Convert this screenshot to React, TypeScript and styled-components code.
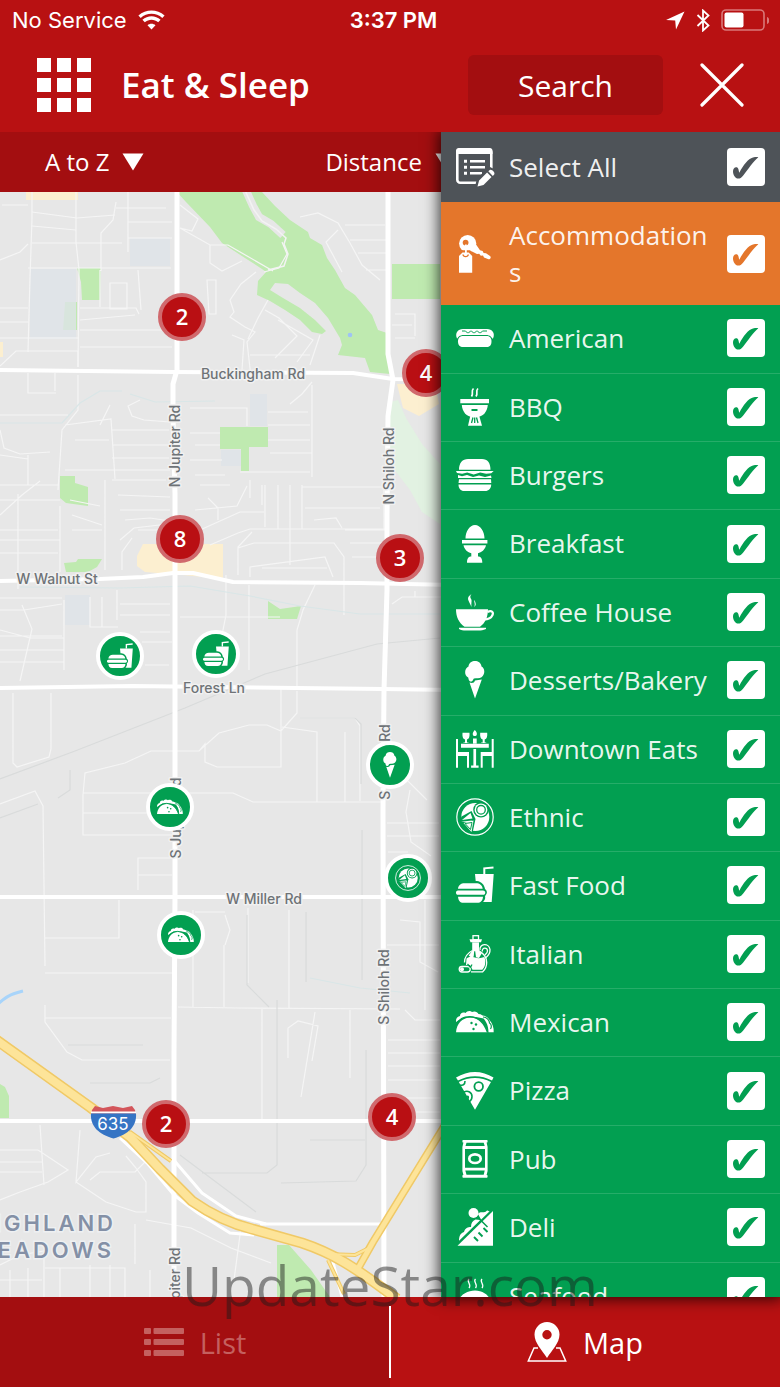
import React, { useState } from "react";
import styled, { createGlobalStyle, css } from "styled-components";

const color = {
  red: "#b81112",
  redDark: "#a30e10",
  green: "#029f51",
  orange: "#e4762b",
  slate: "#4e5358",
  land: "#e7e7e7",
  park: "#bfeab0",
};
const sans = `"Open Sans", "Noto Sans", sans-serif`;
const system = `Inter, "Liberation Sans", sans-serif`;

const GlobalStyle = createGlobalStyle`
  * { box-sizing: border-box; }
  body { margin: 0; background: ${color.red}; font-family: ${sans}; color: #fff; }
  button { font: inherit; color: inherit; border: 0; padding: 0; background: none; cursor: pointer; }
`;

/* ---------- shell ---------- */

const Screen = styled.div`
  position: relative;
  display: flex;
  flex-direction: column;
  height: 100vh;
  overflow: hidden;
  background: ${color.red};
`;

const TopArea = styled.header`
  position: relative;
  z-index: 3;
  background: ${color.red};
`;

const StatusBar = styled.div`
  display: grid;
  grid-template-columns: 1fr auto 1fr;
  align-items: center;
  height: 40px;
  padding: 0 11px 0 12px;
  font: 400 22px/28px ${system};
`;

const StatusGroup = styled.div<{ $end?: boolean }>`
  display: flex;
  align-items: center;
  gap: 11px;
  justify-content: ${(p) => (p.$end ? "flex-end" : "flex-start")};
`;

const Clock = styled.time`
  padding-left: 6px;
  font-weight: 600;
`;

const TitleBar = styled.div`
  display: flex;
  align-items: center;
  height: 90px;
  margin-bottom: 2px;
  padding: 0 36px 0 37px;
`;

const IconButton = styled.button`
  display: flex;
`;

const Title = styled.h1`
  flex: 1;
  margin: 0 0 0 30px;
  font-size: 35px;
  line-height: 46px;
  font-weight: 600;
`;

const SearchButton = styled.button`
  width: 195px;
  height: 60px;
  margin-right: 37px;
  border-radius: 6px;
  && {
    background: ${color.redDark};
    font-size: 30px;
  }
`;

const Body = styled.main`
  position: relative;
  z-index: 2;
  flex: 1;
  min-height: 0;
  display: flex;
  flex-direction: column;
`;

const SortBar = styled.div`
  display: flex;
  align-items: center;
  gap: 181px;
  height: 60px;
  padding: 0 45px;
  background: ${color.redDark};
`;

const SortButton = styled.button`
  display: flex;
  align-items: center;
  gap: 13px;
  && {
    font-size: 24px;
    line-height: 36px;
  }
`;

/* ---------- map ---------- */

const MapCanvas = styled.section`
  position: relative;
  flex: 1;
  min-height: 0;
  overflow: hidden;
  background: ${color.land};
`;

const MapDrawing = styled.svg`
  position: absolute;
  left: 0;
  top: 0;
  width: 780px;
  height: 1105px;
`;

const pinBase = css<{ $x: number; $y: number }>`
  position: absolute;
  left: ${(p) => p.$x}px;
  top: ${(p) => p.$y}px;
  transform: translate(-50%, -50%);
  display: flex;
  align-items: center;
  justify-content: center;
  border-radius: 50%;
`;

const Cluster = styled.button<{ $x: number; $y: number }>`
  ${pinBase}
  && {
    width: 48px;
    height: 48px;
    padding-bottom: 2px;
    border: 4px solid #d0696d;
    background: #b90f13;
    font-size: 22px;
    font-weight: 600;
    line-height: 30px;
  }
`;

const Pin = styled.button<{ $x: number; $y: number }>`
  ${pinBase}
  && {
    width: 48px;
    height: 48px;
    border: 4px solid #fff;
    background: ${color.green};
  }
`;

/* ---------- category panel ---------- */

const Panel = styled.aside`
  position: absolute;
  top: 0;
  right: 0;
  bottom: 0;
  width: 339px;
  max-width: 80%;
  box-shadow: 0 0 14px 2px rgba(0, 0, 0, 0.75);
`;

const PanelScroll = styled.div`
  height: 100%;
  overflow-y: auto;
  scrollbar-width: none;
  background: ${color.green};
`;

const rowKinds = {
  all: { bg: color.slate, padding: "17px 15px", border: "none" },
  stay: { bg: color.orange, padding: "15px", border: "none" },
  food: { bg: color.green, padding: "15px 15px 16px", border: "1px solid #26ad69" },
};
type Kind = keyof typeof rowKinds;

const Row = styled.label<{ $kind: Kind }>`
  display: flex;
  align-items: center;
  gap: 15px;
  padding: ${(p) => rowKinds[p.$kind].padding};
  border-bottom: ${(p) => rowKinds[p.$kind].border};
  background: ${(p) => rowKinds[p.$kind].bg};
  font-size: 26px;
  line-height: 1.4;
  cursor: pointer;
`;

const RowName = styled.span`
  flex: 1;
  min-width: 0;
  overflow-wrap: anywhere;
  color: rgba(255, 255, 255, 0.93);
`;

const CheckBox = styled.span`
  flex: none;
  display: grid;
  width: 38px;
  height: 38px;
  margin: -1px 0;
  & > * {
    grid-area: 1 / 1;
  }
`;

const CheckInput = styled.input`
  appearance: none;
  width: 38px;
  height: 38px;
  margin: 0;
  border-radius: 4px;
  background: #fff;
  cursor: pointer;
  &:not(:checked) + svg {
    visibility: hidden;
  }
`;

const CheckMark = styled.svg`
  position: relative;
  width: 38px;
  height: 38px;
  pointer-events: none;
`;

const IconSvg = styled.svg<{ $bg: string; $size: number }>`
  flex: none;
  width: ${(p) => p.$size}px;
  height: ${(p) => p.$size}px;
  margin: -1px 0;
  overflow: visible;
  fill: #fff;
  .cut {
    fill: ${(p) => p.$bg};
  }
  .cutline {
    fill: none;
    stroke: ${(p) => p.$bg};
  }
  .line {
    fill: none;
    stroke: #fff;
  }
`;

/* ---------- footer ---------- */

const TabBar = styled.nav`
  display: flex;
  flex: none;
  height: 90px;
`;

const Tab = styled.button<{ $dim?: boolean }>`
  flex: 1;
  display: flex;
  align-items: center;
  justify-content: center;
  gap: 16px;
  && {
    background: ${(p) => (p.$dim ? color.redDark : color.red)};
    color: ${(p) => (p.$dim ? "#c4605f" : "#fff")};
    font-size: 29px;
  }
`;

const TabDivider = styled.span`
  width: 2px;
  margin: 9px -1px;
  z-index: 1;
  background: #fff;
`;

const Watermark = styled.div`
  position: absolute;
  z-index: 4;
  left: 0;
  right: 0;
  bottom: 66px;
  text-align: center;
  font-size: 55px;
  line-height: 72px;
  color: rgba(25, 25, 25, 0.47);
  pointer-events: none;
`;

/* ---------- icons, drawn on a 38 unit square ---------- */

const icons: Record<string, React.ReactNode> = {
  selectAll: (
    <>
      <rect x="1.3" y="1.3" width="34" height="33.4" rx="3" className="line" strokeWidth="2.6" />
      <path d="M0 6V3a3 3 0 0 1 3-3h30.500a3 3 0 0 1 3 3v3z" />
      <path d="M8 11.800h3v3H8zM8 17.800h3v3H8zM8 23.800h3v3H8zM14 12h15v2.600H14zM14 18h15v2.600H14zM14 24h12v2.600H14z" />
      <path className="cut" d="M19 39l2-9L34 19l6 3v17z" />
      <path d="M21.500 38.500l1.600-6 8-8 4.400 4.400-8 8zM32.300 23.300l1.500-1.300c1.500-1.300 6 2.500 4.400 4.500l-1.400 1.400z" />
    </>
  ),
  key: (
    <>
      <path d="M13 15l6-7 5 7.200 2.600.8 1 2 2.400.3 4 2.700c1.500 1.300.5 3.500-1.500 3.300L28 22.500l-1-2-2.200.2-1.600-2-2.200.3z" />
      <circle cx="11.700" cy="8.600" r="8.600" />
      <circle cx="9.600" cy="7.600" r="2.900" className="cut" />
      <path className="cut" d="M1 20l5-4.800h8L19.500 20v3H1z" />
      <path d="M3 37.700V21l3.500-3.500h6.200L16.200 21v16.700z" />
      <path className="cutline" strokeWidth="1.400" d="M7 19.500c.5 2.800 4.800 2.800 5.300 0" />
      <path d="M9 9.500h1.800V20H9z" />
    </>
  ),
  hotdog: (
    <>
      <path d="M1 19.500C-1.500 14 2 10 7 10h24c5 0 8.500 4 6 9.500z" />
      <path className="cut" d="M1 21.500C1 18 4 15.900 7.500 15.900h22.700c3.500 0 6.300 2.100 6.300 5.600z" />
      <path className="cutline" strokeWidth="1" d="M6 12h3.500c1.500 2.300 3.500 2.300 5 0h1c1.500 2.300 3.500 2.300 5 0h1c1.500 2.300 3.500 2.300 5 0H31" />
      <path d="M2 22.500c0-3.800 2-5.400 5.500-5.400h23c3 0 5 1.600 5 5.400 0 3.800-2 5.500-5 5.500H7c-3 0-5-1.700-5-5.500z" />
    </>
  ),
  bbq: (
    <>
      <path className="line" strokeWidth="1.700" d="M17.500.5c-3 3 .5 4-2 8M22 .5c-3 3 .5 4-2 8" />
      <path d="M4.300 11H33v4.300H4.300zM5.800 17h26c-.5 7-5 12-11 12h-4c-6 0-10.500-5-11-12z" />
      <path className="cut" d="M15.500 21h6v2h-6z" />
      <path d="M14.500 27h8.500l3 10.700H12z" />
      <path className="cutline" strokeWidth="1.300" d="M17 29.500l-1.500 5.500M18.700 29.500V35M20.500 29.500l1.500 5.500" />
    </>
  ),
  burger: (
    <>
      <path d="M3 13.700C3 7 6.500 3 12 3h14c5.500 0 8.500 4 8.500 10.700zM2.500 28.500h32.700c0 4-2.500 6.500-6 6.500h-21c-3.500 0-5.700-2.500-5.700-6.500z" />
      <path d="M0 15h37.700l-2.500 2.200-5 .6-6-1.300-6.500 2-6.500-2-5 1.300L1 17zM3 23.300h32l.3 3.700H2.500zM2 19l4 1.300 5-1.300 6 2 6-1.500 6 1.500 6-1.500.5 2.500H2z" />
    </>
  ),
  egg: (
    <path d="M9.500 13.400C9.500 7 13.500 0 19 0s9.500 7 9.500 13.400zM6 15h25.400v3.600H6zM7.500 20.300H30c-1 4.700-4.500 7-8 8v3.200c2.500 0 4.300 1.500 4.300 6.200H11c0-4.700 1.800-6.200 4.300-6.200v-3.200c-3.500-1-6.800-3.300-7.800-8z" />
  ),
  coffee: (
    <>
      <path d="M0 16.300h32c0 8-3 14-8 17.500H8.500C3 30 0 24 0 16.300zM3 34.800h27v1.200c-3 1.500-5 1.500-7 1.500H10c-3 0-5 0-7-1.500z" />
      <path className="line" strokeWidth="2.200" d="M31.500 19c4-2 6.300 0 5 3-1 2.500-4.500 4.500-8 4.500" />
      <path d="M15.500 1c-6 4-3 6 0 13-.5-6 1-6-1-9-.5-1.500 0-2.500 1-4zM18.500 7c-1 2 1.500 4-.5 7 3-2 1.500-4 .5-7z" />
    </>
  ),
  cone: (
    <>
      <path d="M12.500 5.500C13 1.500 16 0 19 0s6 1.500 6.500 5.500c3.500 1.500 4 8 0 10.700-2 1.500-5 .8-7.500 1.300-1 .5-1 3-3 3-2.500 0-2.300-2.700-2.800-4-4.200-2-4-9 .3-11z" />
      <path d="M19 19.500l6.800-1L19 37.600l-5.500-16c2.500.8 5 .4 5.500-2.100z" />
    </>
  ),
  dining: (
    <>
      <path d="M0 9h2v13h11v15.700h-2V26H2v11.700H0zM37.700 9h-2v13h-11v15.700h2V26h9v11.700h2z" />
      <path d="M5 13.700h27.800v4H5zM17.400 19h2.700v16.500h2.500v2.200h-7.500v-2.200h2.300zM17 8.500h3.700v5H17zM18.800 0c1.800 2 2.300 3 2 4.500-.3 2-3.700 2-4 0-.3-1.500.4-2.500 2-4.500zM6.500 2.700h7c.3 3.500-.2 6-2.500 6.800v3h1.500V13H7.500v-.5H9v-3c-2.300-.8-2.800-3.300-2.500-6.800zM24.200 2.700h7c.3 3.500-.2 6-2.500 6.800v3h1.500V13h-5v-.5h1.500v-3c-2.300-.8-2.800-3.300-2.500-6.800z" />
    </>
  ),
  ethnic: (
    <>
      <circle cx="19" cy="19" r="18.200" className="line" strokeWidth="1.200" />
      <circle cx="19.300" cy="19" r="14" />
      <circle cx="25" cy="11.800" r="7.800" className="cut" />
      <circle cx="25" cy="11.800" r="6.400" />
      <circle cx="25" cy="11.800" r="4.300" className="cutline" strokeWidth="1.300" />
      <path className="cut" d="M3 25l2.500-6.500 10-5.500 4 8-3 14-7.500-3z" />
      <path d="M14.500 15l2 5.500L6 22zM5 23.700l11-1.200-1.500 2zM17.500 22.500l-2 11.500L7.500 25z" />
      <path className="cutline" strokeWidth="1" d="M16 24.500L9 25.500l5.500 6z" />
    </>
  ),
  fastFood: (
    <>
      <path d="M19 8h18.700l-2 28H27c2-2 2.500-4 2-6 2.500-2.500 2.500-5 0-7-.5-4-3.500-7.500-8-8h-1.300z" />
      <path className="line" strokeWidth="2" d="M28.300 8V2.300l9.200-.8" />
      <path d="M2 22.800c.3-3.500 3-5.500 6.500-5.500H20c3.500 0 6.500 2 6.700 5.500zM2 24.500h25c3 0 3 4.300 0 4.300H2c-2.700 0-2.700-4.300 0-4.300zM2 30.700h25c-.3 4-2.500 6-5.500 6h-14c-3.500 0-5-2-5.500-6z" />
    </>
  ),
  oil: (
    <>
      <rect x="17" y=".7" width="5.500" height="4" className="line" strokeWidth="1.300" />
      <path d="M13.500 4.300H26l-1 2.900H14.500zM16.200 7.500h6.800v8.200l3 2.300-3 5-3-.8-.8-6h-1l-.5 5.300-2 1.500-3-2.500 3.500-4.800z" />
      <path className="line" strokeWidth="1.300" d="M16.500 15.500C11.500 18 8.500 22 8.500 27.500M22.700 15.500c5 3 8 7 8 12 0 4-1.500 7-4 9.300H15" />
      <path d="M10.500 23.500c3-2.500 5.500-2 8.500-1s6 .8 9.300-.5c.8 1.700 1 3.300 1 5 0 3-1 5.600-3 7.700H16.500L14 30h-4z" />
      <path className="line" strokeWidth="1.300" d="M24 15c-1-6.500 9-7.500 10-.5.3 4-2 6.500-4.500 8.500M26.300 16.500c-.5-4.300 5-4.300 5.200-.5 0 2-1.500 3-2.700 4" />
      <rect x="3.200" y="31.500" width="11" height="5.500" rx="2.700" className="line" strokeWidth="1.300" />
      <circle cx="6" cy="34.200" r="2" />
      <path className="cutline" strokeWidth="1.200" d="M11.500 29l3 3.500M16 29.500l-1.500 3" />
    </>
  ),
  taco: (
    <>
      <path d="M0 19c-.3-3 1-5.500 4-6 0-3 3-4.300 5.500-3C11 7.600 14.500 7.300 16 9c2.500-1.300 5.500-.3 6.500 2 3 0 5 2 5.200 4.500L20 14 8 14z" />
      <path d="M24.500 12.500c4-.5 7 1 9 4.500 3 3.500 4.500 8 4.200 12.300h-5.200C32.500 22 29.500 16.500 24.500 12.500z" />
      <path className="cutline" strokeWidth="1.200" d="M27 14c4 0 6.500 3.500 6.500 6 2.500 1.500 2 4.500 1 6" />
      <path d="M0 29.300C.5 21 6 14.500 14.500 14.500S29 21 31.500 29.300z" />
      <path className="cutline" strokeWidth="1.400" d="M0 21.500c3-5 8.500-8 14-7.800 9 .3 14.500 7 17.500 15.600" />
      <circle cx="15.500" cy="20" r="1.200" className="cut" />
      <circle cx="20" cy="21.500" r="1.200" className="cut" />
      <circle cx="17.500" cy="26" r="1.200" className="cut" />
    </>
  ),
  pizza: (
    <>
      <path d="M0 5.500C12-2 26-2 37.500 5.500L36 8.500C25 2.800 13 2.800 2 8.500zM2.800 10C13 4.600 25 4.600 35 10L19 37.700z" />
      <circle cx="22.700" cy="14.500" r="4.300" className="cutline" strokeWidth="1.800" />
      <path className="cutline" strokeWidth="1.600" d="M8 20c4-2 8 .5 8 4.500 0 2.500-1 4-2.500 5M4 13c3 1 5-.5 5-4" />
      <path className="cut" d="M10.500 24c1.500-1.500 3 0 2.500 2.500l-1 .5z" />
    </>
  ),
  can: (
    <>
      <path d="M7 0h24c.8 0 .8 2.600 0 2.600h-.4l1 4.400v24l-1 4h.4c.8 0 .8 2.700 0 2.700H7c-.8 0-.8-2.700 0-2.700h.4l-1-4V7l1-4.400H7c-.8 0-.8-2.600 0-2.600z" />
      <path className="cut" d="M10.500 2.700h17.200l1 3.300H9.500zM9 9h20v18.700H9zM9.300 30.500h19.400l-1 4.300H10.500z" />
      <ellipse cx="19" cy="18.700" rx="5.700" ry="4.300" className="line" strokeWidth="2.700" />
    </>
  ),
  deli: (
    <>
      <path d="M1.500 37.700L37 3v34.700z" />
      <circle cx="17.500" cy="5" r="5" />
      <path d="M3 33c0-5 1.500-8 5-9 1-4 4-5 7-5 0-4 1.500-6 4.500-7.500L24.500 12zM22 6c3-3.500 5.500 0 8.500-3 1.500-1.500 2 1 4 .5l-9 9z" />
      <path className="cutline" strokeWidth="1.500" d="M1 36L36 2M22.500 10l9 9" />
      <path className="cutline" strokeWidth="1.900" d="M18 29l4 4M22.500 24.500l4 4M27.500 20l4 4" />
    </>
  ),
  seafood: (
    <>
      <path className="line" strokeWidth="1.300" d="M13 2c-3 3 3 5 0 9M19.500 2c-3 3 3 5 0 9M26 2c-3 3 3 5 0 9" />
      <path d="M2 24c3-7 10-10.500 17-10.500S32 17 35 24z" />
    </>
  ),
};

const Glyph = ({ name, bg = color.green, size = 38 }: { name: string; bg?: string; size?: number }) => (
  <IconSvg viewBox="0 0 38 38" $bg={bg} $size={size} aria-hidden="true">
    {icons[name]}
  </IconSvg>
);

const Tick = ({ bg }: { bg: string }) => (
  <CheckMark viewBox="0 0 38 38" fill={bg} aria-hidden="true">
    <path d="M6 23.200c0-2.300 1.300-4 3.200-4 2.300 0 2.300 2.500 3.100 5.500C16.500 17 21 11 26 9.600c2-.6 4.500-.6 5.300-.4C26.500 13 20.500 22 16 27.800c-1.700 2.200-2.800 2.800-4.800 2.800C8.300 30.600 6 27 6 23.200z" />
  </CheckMark>
);

/* ---------- data ---------- */

const categories: { name: string; icon: string; kind: Kind }[] = [
  { name: "Select All", icon: "selectAll", kind: "all" },
  { name: "Accommodations", icon: "key", kind: "stay" },
  { name: "American", icon: "hotdog", kind: "food" },
  { name: "BBQ", icon: "bbq", kind: "food" },
  { name: "Burgers", icon: "burger", kind: "food" },
  { name: "Breakfast", icon: "egg", kind: "food" },
  { name: "Coffee House", icon: "coffee", kind: "food" },
  { name: "Desserts/Bakery", icon: "cone", kind: "food" },
  { name: "Downtown Eats", icon: "dining", kind: "food" },
  { name: "Ethnic", icon: "ethnic", kind: "food" },
  { name: "Fast Food", icon: "fastFood", kind: "food" },
  { name: "Italian", icon: "oil", kind: "food" },
  { name: "Mexican", icon: "taco", kind: "food" },
  { name: "Pizza", icon: "pizza", kind: "food" },
  { name: "Pub", icon: "can", kind: "food" },
  { name: "Deli", icon: "deli", kind: "food" },
  { name: "Seafood", icon: "seafood", kind: "food" },
];

const clusters = [
  { x: 182, y: 125, count: 2 },
  { x: 426, y: 181, count: 4 },
  { x: 180, y: 347, count: 8 },
  { x: 400, y: 366, count: 3 },
  { x: 166, y: 932, count: 2 },
  { x: 392, y: 925, count: 4 },
];

const places = [
  { x: 120, y: 464, icon: "fastFood" },
  { x: 216, y: 462, icon: "fastFood" },
  { x: 390, y: 573, icon: "cone" },
  { x: 170, y: 615, icon: "taco" },
  { x: 408, y: 686, icon: "ethnic" },
  { x: 181, y: 743, icon: "taco" },
];

/* Street map of the area around Jupiter Rd and Shiloh Rd */
const StreetMap = () => (
  <MapDrawing viewBox="0 192 780 1105" role="img" aria-label="Street map">
    <g fill={color.park}>
      <path d="M175 190L186 202L210 227L222 243L245 258L262 269L266 272L258 281L257 295L270 301L285 310L300 320L312 332L322 334L326 331L315 320L300 308L283 298L270 290L275 283L288 284L300 293L315 303L328 318L340 338L342 345L338 355L365 358L370 372L390 374L387 333L378 330L372 315L355 295L345 288L335 270L327 258L322 245L310 238L308 232L290 220L275 206L262 192V190z" />
      <path d="M77 268h24l-1 32H82l-1-18zM65 302h12v28H63l1-14zM392 264h48v35h-48zM220 427h48v20h-19v24h-8v-22h-21zM60 476h15v7l13 4v19l-22-3-6-5zM64 563l12-1 2-3h24l-5 8-9 5H66zM268 601l12 8 21-3-4 13h-29zM0 1084l5 3 4 9v22H0zM277 1245h12l22 25 19 27h-53z" />
    </g>
    <path d="M244 186l9 20 6 11 12 7 12 11" fill="none" stroke={color.land} strokeWidth="8" />
    <path d="M244 188l10 22 8 11 14 8 10 9-2 6 4 10-4 12-16 4" fill="none" stroke="#f3f3f3" strokeWidth="1.500" />
    <path d="M390 402l8-2 8 18 16 26 18 20v60l-18-12-12-22-20-26z" fill="#e2f2e2" />
    <g fill="#fcefd0">
      <path d="M26 192h52v8H26zM137 556l6-12h80v35l-40-4-38-3-8-6zM397 384h38l4 20-20 12-16-8zM0 342h3v15H0z" />
    </g>
    <path
      fill="#dfe3e8"
      opacity=".8"
      d="M30 269h46v70H30zM130 238h40v28h-40zM221 450h20v16h-20zM65 595h25v30H65zM250 394h17v32h-17z"
    />
    <circle cx="350" cy="335" r="2.300" fill="#9fc3f5" />

    <g fill="none" stroke="#f5f5f5" strokeWidth="1.200">
      <path d="M32 192v26l-2 60-2 74M76 192v50l3 28-1 97M128 192v60M100 270v37M116 202l-3 18-12 13v38" />
      <path d="M2 205h26M32 212l45 6 38-3M32 226l44 4M32 243h90M28 268h143M0 260l20-8 8-8M116 208h50M128 222h44M128 238h44M80 308h56l3 6M80 320l55-5M80 330h88M80 347h92M0 338h78M0 366l16-15h62v16M0 308h28M0 322h28M110 283h17v26h-17zM138 270l3 40M207 280h9v34h-7z" />
      <path d="M180 205l18 14-6 12-12-3 30 17h18l45 26M210 245v18l12 8 20-10M256 272l-15 12-11 16 4 12-4 5 15 10 10 5-8 10 4 35M268 300l-10 18-10 21M265 310l14 8 18 18-22 22M278 320l35 20-16 22M320 335l-10 30M250 355h60M300 217l18-4 20 10 12 20 12 22 18 15M338 230l-12 12 16 30M282 242l5 12-8 14-15 4M345 225h40M350 240h36M358 253h28M366 270h22M395 314h20v22M392 325h20M395 338h20M232 335l12 5-2 30" />
      <path d="M28 373v20h28M0 415h68M55 373v18M78 375v35l-16 20-4 60M110 405l-10 20M140 400l-12 6 4 10 12 4 26 2M65 425l46-6 4 60M111 430h58M75 440h34M0 430l4 18 16 6 30-2M0 455l28 4M28 455v30M65 470h105M112 445h57M112 458h57M112 480h54" />
      <path d="M190 433h30M195 445h25M190 460h32M195 475h30M217 408h30v18M312 385v92M268 412h40M268 425h42M268 440h42M270 453h42M240 472h70M250 480v18M262 485v20M190 408h50M290 404l12-10 10-12" />
      <path d="M0 485h58M0 500h60M0 515l22-20 18-14M18 494v95M60 506v66M0 530h58M0 540h60M0 553h58M70 500l30 6M72 515l30 10M72 530h30M105 480v90M118 495l52 2M120 510h50M125 520l25-2 20 3M120 540l14-12 34-4M122 570v-18l10-14M138 530h30M0 598h62M0 610h24l38-6M22 605l10 24-12 52M0 630l30 8h34M0 650h64M0 662h64M0 636h62M90 597v30h28M102 597v30M117 590v30M64 600v70M120 604h50M120 615h50M140 632h30M142 642h30M145 665h24" />
      <path d="M200 485h30M208 498l10 10v12M195 510l42-4 10-20M200 530l40-18h24M210 545l28-12 12-4h135M238 575v-28l14-15M238 560v-12l16-5h80l10 14v58M250 577v-10l75-10 8 20M262 568h65M265 485v42M278 485v44M290 485v80M302 485v44v-42h82v42M305 508h75M314 520l22-2 6 10M226 575v40l-4 20M249 585v85M180 617h100M315 585l-12 25-6 20v60M345 530h40M350 543h35M352 557h33M392 604l10-7h40M415 591v6" />
      <path d="M13 693v70l4 4 32-10 2-8v-56M83 795l2-22 40-10 26-12h48l20-18 30-8h18l14 6 16-18v-22M200 750l5-6v18l12 5h64v-80M282 727l35 5v70M300 718h55l5 8v75M83 795v40h90M83 793h150l20 9h130M83 813h68M345 732v70M138 890v-32h34M138 875h34M0 804l35-13 8 15 2 160M45 938h74V900M45 973h128M45 1005v17l22 30 15 8h88M45 1018h126M178 1007l60 1 162 1M193 910v97M224 945v62M225 915l5 15-5 15M289 910v98M248 908v75M262 1009v110M350 1010v68M315 1012l-14 85M288 1058v-30l10-7 20 5-6 35M195 912h30" />
      <path d="M387 780h20l20 20M387 823h52M387 836h52M410 790l-4 22 5 30 20 14M388 852h20M387 945h52M400 920l20 2v40l18 10M388 1040h52M388 1053h52M388 1066h52M388 1080h52M388 1098h52M388 1112h52M405 1010l10 10h25M425 900v110" />
      <path d="M0 1150h38l30 20-20 12-28 10-20 8M40 1125l4 60M80 1130l-4 52 20-25 14-4M0 1162h42M0 1172h42M76 1182l30 20 30 10h10v-30l-10-14-10-12M90 1180l10-8h35l10-10M0 1265l20-10 24-4v46M146 1220l45 8 40 20 40 15M242 1220l-8 60M135 1224v40M45 1268h80v29M60 1268v29M90 1265v32M110 1265v32M150 1270v27M0 1280h42M10 1270v27M28 1268v29" />
    </g>
    <g fill="none" stroke="#d9dbdb" strokeWidth="1.200">
      <path d="M0 779l75-28 110-43 80-34 112-30 63-6M0 818l38-14M70 770v20l-12 8M68 1045h75M90 1083h60l10-5M277 1000v165l-10 8h-65M366 1050v115l-10 16-75 2M362 830v150M310 1140h55M180 1155l76 57M300 718h55l6 6v60M247 915v70l22 22M306 912v70" />
    </g>
    <g fill="none" stroke="#d9e6e7" strokeWidth="1.200">
      <path d="M0 423h62l18-20 20-12h22M130 394l25 8 60-1M20 587l100 1 70-2 60 10 50 10 60 8h80M310 978l50 10 50 5" />
    </g>

    <g fill="none" stroke="#fff" strokeWidth="5" strokeLinejoin="round">
      <path d="M177 190v180l-4 14v30l2 80v400l-1 160v243" />
      <path d="M388 190v164l5 26-5 36-1 100v74l-3 100-1 120 1 487" />
      <path d="M0 370l173 2 180 1 40 6 60 1" strokeWidth="4" />
      <path d="M0 581l100-2 43-2 30-4h20l40 9 127 1 93 2" strokeWidth="4" />
      <path d="M0 688l133-2 250 3 70 1M0 897h453M0 1121h453" strokeWidth="4" />
      <path d="M260 1224h124" strokeWidth="3" />
      <path d="M120 1138l28 26 26 31 24 18 32 20 24 2M172 1158l30 35 34 23 30 8M333 1262l9 35" strokeWidth="3" />
    </g>
    <path d="M-4 1006c8-8 14-12 27-15" fill="none" stroke="#a8d4fa" strokeWidth="3" />

    <g fill="none" strokeLinejoin="round">
      <g stroke="#f0c966">
        <path d="M445 1125l-72 117-17 30" strokeWidth="8" />
        <path d="M-5 1039l95 68 40 30 30 32 32 32c20 14 40 23 60 28l50 14c30 10 50 22 95 56" strokeWidth="11" />
        <path d="M130 1132l41 29M325 1254l30 1 16-8M328 1260l16 34" strokeWidth="4" />
      </g>
      <g stroke="#fde499">
        <path d="M130 1132l41 29M325 1254l30 1 16-8M328 1260l16 34" strokeWidth="2" />
        <path d="M445 1125l-72 117-17 30" strokeWidth="5" />
        <path d="M-5 1039l95 68 40 30 30 32 32 32c20 14 40 23 60 28l50 14c30 10 50 22 95 56" strokeWidth="8" />
      </g>
    </g>

    <g>
      <path d="M92 1110l3-4 8 2 10-2 10 2 9-2 3 4 1 5H91z" fill="#d3565b" />
      <path d="M91 1111.500h45v2H91z" fill="#fff" />
      <path d="M91 1113.500h45c1 13-8 21-22.500 25C99 1134.500 90 1126.500 91 1113.500z" fill="#3574c4" />
      <text x="113" y="1130" textAnchor="middle" fill="#fff" fontFamily="Inter, sans-serif" fontSize="17">635</text>
    </g>

    <g
      fill="#6e7377"
      stroke="#f1f1f1"
      strokeWidth="3"
      strokeLinejoin="round"
      paintOrder="stroke"
      fontFamily="Inter, sans-serif"
      fontSize="14"
      fontWeight="500"
      textAnchor="middle"
    >
      <text x="253" y="379">Buckingham Rd</text>
      <text x="57" y="584">W Walnut St</text>
      <text x="214" y="693">Forest Ln</text>
      <text x="264" y="904">W Miller Rd</text>
      <text transform="translate(180 446) rotate(-90)">N Jupiter Rd</text>
      <text transform="translate(394 466) rotate(-90)">N Shiloh Rd</text>
      <text transform="translate(390 762) rotate(-90)">S Shiloh Rd</text>
      <text transform="translate(181 818) rotate(-90)">S Jupiter Rd</text>
      <text transform="translate(389 987) rotate(-90)">S Shiloh Rd</text>
      <text transform="translate(180 1288) rotate(-90)">S Jupiter Rd</text>
    </g>
    <g
      fill="#8490a6"
      stroke="#eef0f2"
      strokeWidth="3"
      paintOrder="stroke"
      fontFamily="Inter, sans-serif"
      fontSize="22"
      fontWeight="600"
      letterSpacing="3"
      textAnchor="end"
    >
      <text x="116" y="1231">HIGHLAND</text>
      <text x="114" y="1258">MEADOWS</text>
    </g>
  </MapDrawing>
);

export default function App() {
  const [checked, setChecked] = useState<Record<string, boolean>>(
    Object.fromEntries(categories.map((c) => [c.name, true]))
  );

  const toggle = (name: string) =>
    setChecked((old) =>
      name === "Select All"
        ? Object.fromEntries(categories.map((c) => [c.name, !old[name]]))
        : { ...old, [name]: !old[name] }
    );

  return (
    <>
      <GlobalStyle />
      <Screen>
        <TopArea>
          <StatusBar>
            <StatusGroup>
              No Service
              <svg width="27" height="20" viewBox="0 0 27 20" fill="#fff" aria-hidden="true">
                <path d="M13.500 19.500l-4-4.200c2.300-2 5.700-2 8 0zM6.800 12.300l-2.400-2.500c5.200-4.700 13-4.700 18.200 0l-2.400 2.500c-3.800-3.500-9.600-3.500-13.400 0zM2.700 8L.4 5.600c7.500-6.800 18.700-6.800 26.200 0L24.300 8c-6.200-5.600-15.400-5.600-21.600 0z" />
              </svg>
            </StatusGroup>
            <Clock>3:37 PM</Clock>
            <StatusGroup $end>
              <svg width="19" height="19" viewBox="0 0 19 19" fill="#fff" aria-hidden="true">
                <path d="M18.500.5L10 18.500 9.200 9.500 0 9z" />
              </svg>
              <svg width="14" height="23" viewBox="0 0 14 23" fill="none" stroke="#fff" strokeWidth="1.800" aria-hidden="true">
                <path d="M1.500 6l11 10.500L7 21.500v-20L12.500 6.500 1.500 17" />
              </svg>
              <svg width="48" height="22" viewBox="0 0 48 22" aria-hidden="true">
                <rect x="1" y="1" width="42" height="20" rx="4" fill="none" stroke="#d97879" strokeWidth="1.600" />
                <rect x="3.500" y="3.500" width="19" height="15" rx="2" fill="#fff" />
                <path d="M46 8c3 1 3 6 0 7z" fill="#d97879" />
              </svg>
            </StatusGroup>
          </StatusBar>
          <TitleBar>
            <IconButton aria-label="Menu">
              <svg width="54" height="54" viewBox="0 0 54 54" fill="#fff">
                {[0, 20, 40].map((y) => [0, 20, 40].map((x) => <rect key={`${x}-${y}`} x={x} y={y} width="14" height="14" />))}
              </svg>
            </IconButton>
            <Title>Eat &amp; Sleep</Title>
            <SearchButton>Search</SearchButton>
            <IconButton aria-label="Close">
              <svg width="44" height="44" viewBox="0 0 44 44" fill="none" stroke="#fff" strokeWidth="3.200" strokeLinecap="round">
                <path d="M2 2l40 40M42 2L2 42" />
              </svg>
            </IconButton>
          </TitleBar>
        </TopArea>

        <Body>
          <SortBar>
            {["A to Z", "Distance"].map((name) => (
              <SortButton key={name}>
                {name}
                <svg width="22" height="18" viewBox="0 0 22 18" fill="#fff" aria-hidden="true">
                  <path d="M.5.500h21L11 17.500z" />
                </svg>
              </SortButton>
            ))}
          </SortBar>

          <MapCanvas>
            <StreetMap />
            {clusters.map((c) => (
              <Cluster key={`${c.x}-${c.y}`} $x={c.x} $y={c.y}>
                {c.count}
              </Cluster>
            ))}
            {places.map((p) => (
              <Pin key={`${p.x}-${p.y}`} $x={p.x} $y={p.y} aria-label={p.icon}>
                <Glyph name={p.icon} size={26} />
              </Pin>
            ))}
          </MapCanvas>

          <Panel>
            <PanelScroll>
              {categories.map((c) => (
                <Row key={c.name} $kind={c.kind}>
                  <Glyph name={c.icon} bg={rowKinds[c.kind].bg} />
                  <RowName>{c.name}</RowName>
                  <CheckBox>
                    <CheckInput type="checkbox" checked={checked[c.name]} onChange={() => toggle(c.name)} />
                    <Tick bg={rowKinds[c.kind].bg} />
                  </CheckBox>
                </Row>
              ))}
            </PanelScroll>
          </Panel>
        </Body>

        <TabBar>
          <Tab $dim>
            <svg width="40" height="28" viewBox="0 0 40 28" fill="currentColor" aria-hidden="true">
              {[0, 11, 22].map((y) => (
                <React.Fragment key={y}>
                  <rect x="0" y={y} width="7" height="6" rx="1" />
                  <rect x="9.500" y={y} width="30.500" height="6" rx="1" />
                </React.Fragment>
              ))}
            </svg>
            List
          </Tab>
          <TabDivider />
          <Tab>
            <svg width="40" height="40" viewBox="0 0 40 40" fill="#fff" aria-hidden="true">
              <path d="M11 26H7L1.300 39h37.400L33 26h-4" fill="none" stroke="#fff" strokeWidth="1.500" />
              <path fillRule="evenodd" d="M20 36C15 28 7.500 21 7.500 12.500a12.500 12.500 0 0 1 25 0C32.500 21 25 28 20 36zM20 8a4.700 4.700 0 1 0 0 9.400A4.700 4.700 0 0 0 20 8z" />
            </svg>
            Map
          </Tab>
        </TabBar>
        <Watermark>UpdateStar.com</Watermark>
      </Screen>
    </>
  );
}
